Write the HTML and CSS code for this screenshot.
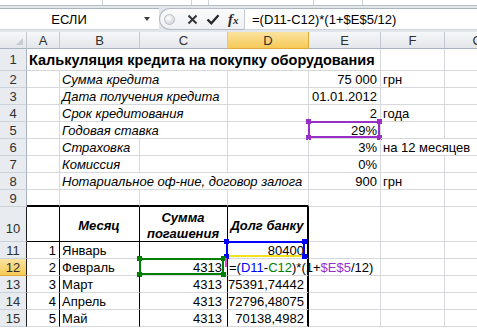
FILE: index.html
```html
<!DOCTYPE html>
<html lang="ru">
<head>
  <meta charset="UTF-8" />
  <title>Калькуляция кредита</title>
  <link rel="stylesheet" href="styles.css">
</head>
<body>

  <div class="ribbon"><span></span><span></span><span></span><span></span><span></span><span></span></div>

  <div class="fbar">
    <div class="namebox"><span class="nbtext">ЕСЛИ</span><span class="arrow"></span></div>
    <div class="fxbtns">
      <span class="dot"></span>
      <svg width="11" height="11" viewBox="0 0 11 11"><path d="M1.5 1.5l8 8M9.5 1.5l-8 8" stroke="#353535" stroke-width="2" fill="none"/></svg>
      <svg width="14" height="11" viewBox="0 0 14 11"><path d="M1.5 5.5l3.8 3.8 7.2-8" stroke="#262626" stroke-width="2.3" fill="none"/></svg>
      <span class="fx">f<span>x</span></span>
    </div>
    <div class="finput">=(D11-C12)*(1+$E$5/12)</div>
  </div>

  <div class="sheet">
    <!-- column headers -->
    <div class="corner"><span class="tri"></span></div>
    <div class="ch">A</div>
    <div class="ch">B</div>
    <div class="ch">C</div>
    <div class="ch sel">D</div>
    <div class="ch">E</div>
    <div class="ch">F</div>
    <div class="ch">G</div>

    <!-- 1 -->
    <div class="rh">1</div>
    <div class="c title s5">Калькуляция кредита на покупку оборудования</div>
    <div class="c"></div><div class="c"></div>

    <!-- 2 -->
    <div class="rh">2</div>
    <div class="c"></div>
    <div class="c i s2">Сумма кредита</div>
    <div class="c"></div>
    <div class="c r">75 000</div>
    <div class="c">грн</div>
    <div class="c"></div>

    <!-- 3 -->
    <div class="rh">3</div>
    <div class="c"></div>
    <div class="c i s2">Дата получения кредита</div>
    <div class="c"></div>
    <div class="c r">01.01.2012</div>
    <div class="c"></div>
    <div class="c"></div>

    <!-- 4 -->
    <div class="rh">4</div>
    <div class="c"></div>
    <div class="c i s2">Срок кредитования</div>
    <div class="c"></div>
    <div class="c r">2</div>
    <div class="c">года</div>
    <div class="c"></div>

    <!-- 5 -->
    <div class="rh">5</div>
    <div class="c"></div>
    <div class="c i s2">Годовая ставка</div>
    <div class="c"></div>
    <div class="c r">29%<span class="ref purple"><i></i><i></i><i></i><i></i></span></div>
    <div class="c"></div>
    <div class="c"></div>

    <!-- 6 -->
    <div class="rh">6</div>
    <div class="c"></div>
    <div class="c i">Страховка</div>
    <div class="c"></div>
    <div class="c"></div>
    <div class="c r">3%</div>
    <div class="c s2">на 12 месяцев</div>

    <!-- 7 -->
    <div class="rh">7</div>
    <div class="c"></div>
    <div class="c i">Комиссия</div>
    <div class="c"></div>
    <div class="c"></div>
    <div class="c r">0%</div>
    <div class="c"></div>
    <div class="c"></div>

    <!-- 8 -->
    <div class="rh">8</div>
    <div class="c"></div>
    <div class="c i s3">Нотариальное оф-ние, договор залога</div>
    <div class="c r">900</div>
    <div class="c">грн</div>
    <div class="c"></div>

    <!-- 9 -->
    <div class="rh">9</div>
    <div class="c top"></div>
    <div class="c top"></div>
    <div class="c top"></div>
    <div class="c top"></div>
    <div class="c"></div>
    <div class="c"></div>
    <div class="c"></div>

    <!-- 10 -->
    <div class="rh tbl low">10</div>
    <div class="c hd"></div>
    <div class="c hd">Месяц</div>
    <div class="c hd">Сумма<br>погашения</div>
    <div class="c hd thick">Долг банку</div>
    <div class="c"></div>
    <div class="c"></div>
    <div class="c"></div>

    <!-- 11 -->
    <div class="rh tbl">11</div>
    <div class="c tl r">1</div>
    <div class="c tl">Январь</div>
    <div class="c tl r pc"></div>
    <div class="c tl thick r">80400<span class="ref blue"><i></i><i></i><i></i><i></i></span></div>
    <div class="c"></div>
    <div class="c"></div>
    <div class="c"></div>

    <!-- 12 -->
    <div class="rh tbl sel">12</div>
    <div class="c tl r">2</div>
    <div class="c tl">Февраль</div>
    <div class="c tl r pc">4313<span class="ref green"><i></i><i></i><i></i><i></i></span></div>
    <div class="c tl thick edit"><span class="caret"></span>=(<b class="cb">D11</b>-<b class="cg">C12</b>)*(1+<b class="cp">$E$5</b>/12)</div>
    <div class="c"></div>
    <div class="c"></div>
    <div class="c"></div>

    <!-- 13 -->
    <div class="rh tbl">13</div>
    <div class="c tl r">3</div>
    <div class="c tl">Март</div>
    <div class="c tl r pc">4313</div>
    <div class="c tl thick r">75391,74442</div>
    <div class="c"></div>
    <div class="c"></div>
    <div class="c"></div>

    <!-- 14 -->
    <div class="rh tbl">14</div>
    <div class="c tl r">4</div>
    <div class="c tl">Апрель</div>
    <div class="c tl r pc">4313</div>
    <div class="c tl thick r">72796,48075</div>
    <div class="c"></div>
    <div class="c"></div>
    <div class="c"></div>

    <!-- 15 -->
    <div class="rh tbl">15</div>
    <div class="c tl r">5</div>
    <div class="c tl">Май</div>
    <div class="c tl r pc">4313</div>
    <div class="c tl thick r">70138,4982</div>
    <div class="c"></div>
    <div class="c"></div>
    <div class="c"></div>
  </div>

</body>
</html>
```

FILE: styles.css
```css
body {
  margin: 0;
  width: 477px;
  height: 328px;
  overflow: hidden;
  font-family: "Liberation Sans", Arial, sans-serif;
  background: #fff;
  color: #000;
}
.ribbon {
  display: flex;
  height: 6px;
  background: #fff;
  border-bottom: 1px solid #b7bec8;
  box-sizing: border-box;
}
.ribbon span {
  box-sizing: border-box;
  border-right: 1px solid #cbd0d7;
}
.ribbon span:nth-child(1) { width: 103px; }
.ribbon span:nth-child(2) { width: 89px; }
.ribbon span:nth-child(3) { width: 17px; }
.ribbon span:nth-child(4) { width: 105px; }
.ribbon span:nth-child(5) { width: 49px; }
.ribbon span:nth-child(6) { flex: 1; border: none; }

.fbar {
  display: flex;
  height: 26px;
  padding: 2px 0;
  box-sizing: border-box;
  background: #e2e6eb;
}
.namebox {
  width: 159px;
  display: flex;
  align-items: center;
  background: #fff;
  border-top: 1px solid #abb3bd;
  border-bottom: 1px solid #d0d5db;
  box-sizing: border-box;
}
.nbtext {
  flex: 1;
  text-align: center;
  font-size: 13px;
  padding-left: 2px;
}
.arrow {
  width: 0;
  height: 0;
  border-left: 3.5px solid transparent;
  border-right: 3.5px solid transparent;
  border-top: 4px solid #3c3c3c;
  margin-right: 9px;
  margin-left: 8px;
}
.fxbtns {
  width: 86px;
  display: flex;
  align-items: center;
  gap: 8px;
  padding-left: 4px;
  box-sizing: border-box;
  background: linear-gradient(#fbfbfc, #eef0f3);
  border: 1px solid #b3bac4;
  border-right: 1px solid #c4cad2;
  border-radius: 11px 0 0 11px;
}
.dot {
  width: 9px;
  height: 9px;
  border-radius: 50%;
  border: 1px solid #b9bdc2;
  background: radial-gradient(circle at 40% 35%, #fff, #c9cdd2);
  margin-right: 4px;
}
.fx {
  font-family: "Liberation Serif", serif;
  font-style: italic;
  font-weight: bold;
  font-size: 15px;
  color: #2c2c2c;
}
.fx span {
  font-size: 11px;
}
.finput {
  flex: 1;
  display: flex;
  align-items: center;
  padding-left: 7px;
  background: #fff;
  font-size: 13px;
  border-top: 1px solid #abb3bd;
  border-bottom: 1px solid #d0d5db;
}

.sheet {
  display: grid;
  grid-template-columns: 27px 33px 80px 88px 81px 72px 64px 66px;
  grid-template-rows: 17px 22px repeat(8, 17px) 35px repeat(5, 17px);
  width: 511px;
  background: #fff;
}
.corner, .ch, .rh {
  box-sizing: border-box;
  border-right: 1px solid #c3c9d1;
  border-bottom: 1px solid #c3c9d1;
  color: #2f2f2f;
  font-size: 13px;
  display: flex;
  align-items: center;
  justify-content: center;
}
.corner, .ch {
  background: linear-gradient(#f6f7f9, #e3e6ea);
  border-bottom-color: #a9b3bf;
}
.corner {
  justify-content: flex-end;
  align-items: flex-end;
  padding: 0 3px 3px 0;
}
.tri {
  width: 0;
  height: 0;
  border-left: 7px solid transparent;
  border-bottom: 7px solid #c8cdd3;
}
.rh {
  background: #e8ebef;
  border-right-color: #a9b3bf;
  border-bottom-color: #ccd1d7;
}
.ch.sel, .rh.sel {
  background: linear-gradient(#fbe3a0, #f5c956);
  border-right-color: #e0ab3a;
  border-bottom-color: #e0ab3a;
}
.rh.tbl {
  border-right-color: #1f1f1f;
}
.rh.low {
  align-items: flex-end;
  padding-bottom: 5px;
}

.c {
  position: relative;
  box-sizing: border-box;
  border-right: 1px solid #d6d8db;
  border-bottom: 1px solid #d6d8db;
  display: flex;
  align-items: center;
  padding: 0 3px 0 2px;
  font-size: 13px;
  white-space: nowrap;
}
.s2 { grid-column: span 2; }
.s3 { grid-column: span 3; }
.s5 { grid-column: span 5; }
.r { justify-content: flex-end; }
.i { font-style: italic; }
.title {
  font-weight: bold;
  font-size: 14.5px;
}
.pc { padding-right: 5px; }

/* table borders */
.top { border-bottom: 2px solid #000; }
.tl { border-right-color: #000; }
.thick { border-right: 2px solid #000; }
.hd {
  border-right-color: #000;
  border-bottom-color: #000;
  justify-content: center;
  text-align: center;
  font-weight: bold;
  font-style: italic;
  line-height: 16px;
  padding-top: 3px;
}
.hd.thick { border-right: 2px solid #000; }

/* edited cell */
.edit {
  padding-left: 1px;
}
.edit b {
  font-weight: normal;
}
.cb { color: #0000ff; }
.cg { color: #008000; }
.cp { color: #9a2fc8; }
.caret {
  position: absolute;
  left: -3px;
  top: -1px;
  width: 2px;
  height: 9px;
  background: #e545d8;
}

/* reference boxes */
.ref {
  position: absolute;
  top: -1px;
  left: -1px;
  right: 0;
  bottom: 0;
  border: 2px solid currentColor;
}
.ref i {
  position: absolute;
  width: 5px;
  height: 5px;
  background: currentColor;
}
.ref i:nth-child(1) { top: -4px; left: -4px; }
.ref i:nth-child(2) { top: -4px; right: -4px; }
.ref i:nth-child(3) { bottom: -4px; left: -4px; }
.ref i:nth-child(4) { bottom: -4px; right: -4px; }
.purple { color: #9a2fc8; }
.blue {
  color: #0000ff;
  left: -2px;
  right: 2px;
  bottom: 1px;
  border-bottom-color: #f2e21c;
}
.green {
  color: #008000;
  right: 3px;
}
```
